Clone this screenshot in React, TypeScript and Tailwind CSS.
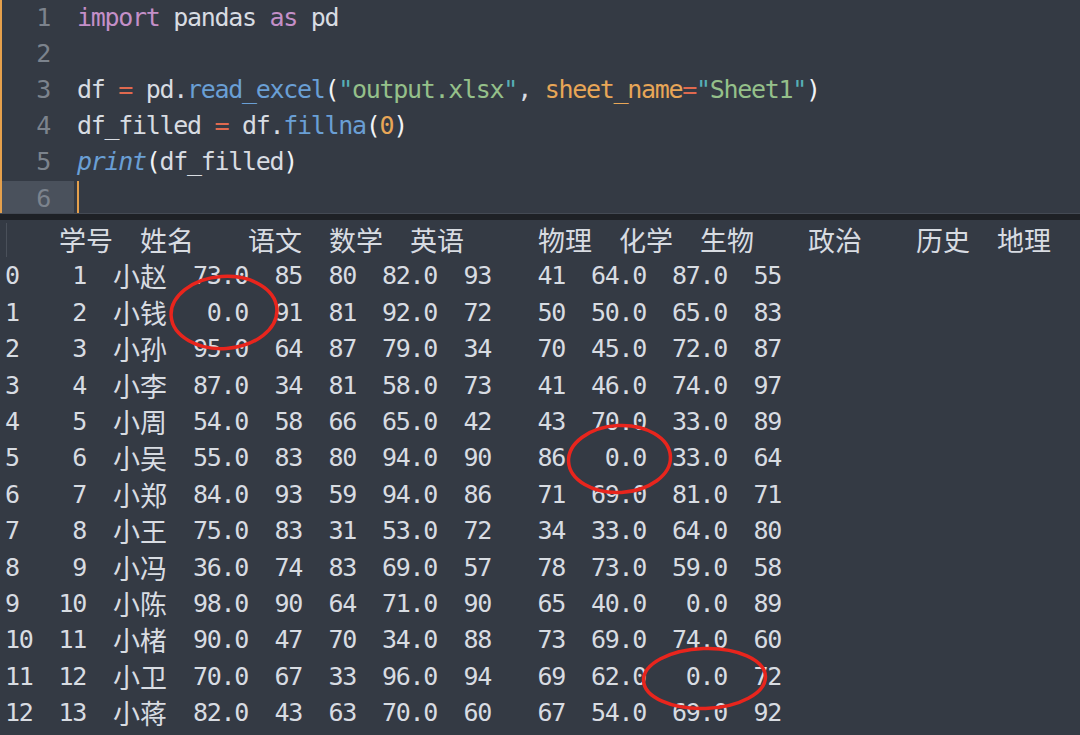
const mono = "font-['DejaVu_Sans_Mono','Noto_Sans_CJK_SC',monospace] text-[25px] tracking-[-1.3px]";
const cjk = "font-['Noto_Sans_CJK_SC',sans-serif] text-[27px] tracking-normal";

type Tok = [string, string];

const code: Tok[][] = [
  [["import", "text-[#c48fc8]"], [" pandas ", ""], ["as", "text-[#c48fc8]"], [" pd", ""]],
  [],
  [
    ["df ", ""],
    ["=", "text-[#e0694f]"],
    [" pd.", ""],
    ["read_excel", "text-[#6a9fd5]"],
    ["(", "text-[#f0f2f5]"],
    ['"', "text-[#56afb6]"],
    ["output.xlsx", "text-[#95c08a]"],
    ['"', "text-[#56afb6]"],
    [", ", ""],
    ["sheet_name", "text-[#e8a657]"],
    ["=", "text-[#e0694f]"],
    ['"', "text-[#56afb6]"],
    ["Sheet1", "text-[#95c08a]"],
    ['"', "text-[#56afb6]"],
    [")", "text-[#f0f2f5]"],
  ],
  [
    ["df_filled ", ""],
    ["=", "text-[#e0694f]"],
    [" df.", ""],
    ["fillna", "text-[#6a9fd5]"],
    ["(", "text-[#f0f2f5]"],
    ["0", "text-[#e8a657]"],
    [")", "text-[#f0f2f5]"],
  ],
  [
    ["print", "text-[#6a9fd5] italic"],
    ["(", "text-[#f0f2f5]"],
    ["df_filled", ""],
    [")", "text-[#f0f2f5]"],
  ],
  [],
];

const headers = [
  ["学号", "w-[81px]"],
  ["姓名", "w-[108px]"],
  ["语文", "w-[81px]"],
  ["数学", "w-[81px]"],
  ["英语", "w-[128px]"],
  ["物理", "w-[81px]"],
  ["化学", "w-[81px]"],
  ["生物", "w-[108px]"],
  ["政治", "w-[108px]"],
  ["历史", "w-[81px]"],
  ["地理", "w-[60px]"],
];

const colW = [
  "w-[27px] text-left",
  "w-[54px] text-right",
  "w-[81px] text-right",
  "w-[81px] text-right",
  "w-[54px] text-right",
  "w-[54px] text-right",
  "w-[81px] text-right",
  "w-[54px] text-right",
  "w-[74px] text-right",
  "w-[81px] text-right",
  "w-[81px] text-right",
  "w-[54px] text-right",
];

const data = [
  "0 1 小赵 73.0 85 80 82.0 93 41 64.0 87.0 55",
  "1 2 小钱 0.0 91 81 92.0 72 50 50.0 65.0 83",
  "2 3 小孙 95.0 64 87 79.0 34 70 45.0 72.0 87",
  "3 4 小李 87.0 34 81 58.0 73 41 46.0 74.0 97",
  "4 5 小周 54.0 58 66 65.0 42 43 70.0 33.0 89",
  "5 6 小吴 55.0 83 80 94.0 90 86 0.0 33.0 64",
  "6 7 小郑 84.0 93 59 94.0 86 71 69.0 81.0 71",
  "7 8 小王 75.0 83 31 53.0 72 34 33.0 64.0 80",
  "8 9 小冯 36.0 74 83 69.0 57 78 73.0 59.0 58",
  "9 10 小陈 98.0 90 64 71.0 90 65 40.0 0.0 89",
  "10 11 小楮 90.0 47 70 34.0 88 73 69.0 74.0 60",
  "11 12 小卫 70.0 67 33 96.0 94 69 62.0 0.0 72",
  "12 13 小蒋 82.0 43 63 70.0 60 67 54.0 69.0 92",
].map((r) => r.split(" "));

export default function App() {
  return (
    <div className="relative h-[735px] w-[1080px] overflow-hidden bg-[#343a44] text-[#d8dce2]">
      {/* editor */}
      <div className={`h-[213px] overflow-hidden border-l-2 border-[#e5a04c] ${mono}`}>
        {code.map((line, i) => (
          <div key={i} className="flex h-[36px] items-center leading-[36px]">
            <div
              className={`flex h-full w-[72px] items-center justify-end pr-[24px] text-[#7c838d] ${
                i === 5 ? "mt-[2px] bg-[#4a515c]" : ""
              }`}
            >
              {i + 1}
            </div>
            <div className="flex h-full items-center pl-[3px] whitespace-pre">
              {i === 5 && <span className="mt-[2px] h-full w-[2px] bg-[#e5a04c]" />}
              {line.map(([t, c], j) => (
                <span key={j} className={c}>
                  {t}
                </span>
              ))}
            </div>
          </div>
        ))}
      </div>

      {/* split */}
      <div className="h-[7px] border-t border-[#444a54] bg-[#1e2126]" />

      {/* terminal */}
      <div className={`pt-[2px] ${mono}`}>
        <div className="flex h-[36.4px] items-center leading-[36.4px]">
          <div className="flex h-full w-[59px] items-center pl-[6px]">
            <span className="h-[34px] w-px bg-[#4a505a]" />
          </div>
          {headers.map(([h, w]) => (
            <span key={h} className={`${cjk} ${w} shrink-0`}>
              {h}
            </span>
          ))}
        </div>
        {data.map((r, i) => (
          <div key={i} className="flex h-[36.4px] items-center pl-[5px] leading-[36.4px]">
            {r.map((v, j) => (
              <span key={j} className={`${colW[j]} shrink-0 whitespace-pre ${j === 2 ? cjk : ""}`}>
                {v}
              </span>
            ))}
          </div>
        ))}
      </div>

      {/* red annotation circles */}
      <svg className="pointer-events-none absolute inset-0" width="1080" height="735" viewBox="0 0 1080 735">
        <g fill="none" stroke="#e8251d" strokeWidth="3.5">
          <ellipse cx="224" cy="312.5" rx="53" ry="36" transform="rotate(-4 224 312.5)" />
          <ellipse cx="619.5" cy="459" rx="51" ry="33.5" transform="rotate(-3 619.5 459)" />
          <ellipse cx="704.5" cy="678.5" rx="61" ry="30" transform="rotate(-2 704.5 678.5)" />
        </g>
      </svg>
    </div>
  );
}
